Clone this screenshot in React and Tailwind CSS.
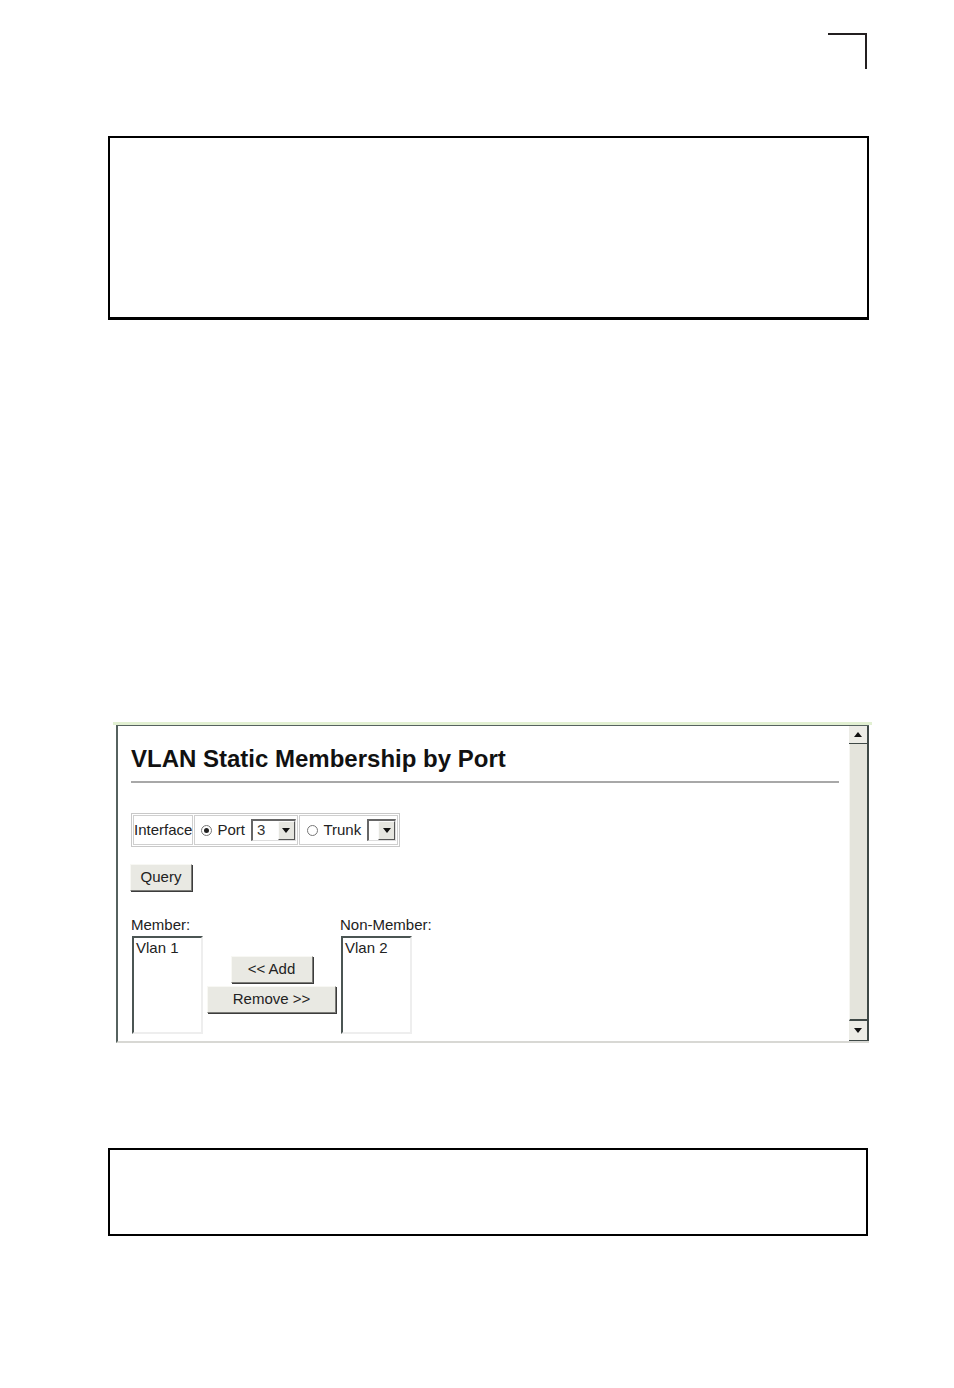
import React from "react";

const font = { fontFamily: '"Liberation Sans", Arial, sans-serif' };

const Btn = ({ children, className = "" }) => (
	<div
		className={`flex items-center justify-center bg-[#e9e9e3] border border-t-[#f8f8f4] border-l-[#f8f8f4] border-b-[#7c7c78] border-r-[#7c7c78] shadow-[1px_1px_0_#3c3c3c] text-[15px] text-[#222] ${className}`}
	>
		{children}
	</div>
);

const Radio = ({ checked }) => (
	<span className="w-[11px] h-[11px] rounded-full border border-[#777] bg-white flex items-center justify-center">
		{checked && <span className="w-[5px] h-[5px] rounded-full bg-[#222]" />}
	</span>
);

const Arrow = ({ down = true }) => (
	<svg width="8" height="5" viewBox="0 0 8 5">
		<path d={down ? "M0 0h8L4 5z" : "M0 5h8L4 0z"} fill="#111" />
	</svg>
);

const Select = ({ value, width }) => (
	<div
		className={`h-[22px] flex items-stretch bg-white border-t-2 border-l-2 border-[#666] border-b border-r border-b-[#ddd] border-r-[#ddd] ${width}`}
	>
		<span className="flex-1 pl-[4px] text-[15px] leading-[18px] text-[#333]">{value}</span>
		<span className="w-[17px] bg-[#e6e6e0] border border-t-[#fafafa] border-l-[#fafafa] border-b-[#555] border-r-[#555] flex items-center justify-center">
			<Arrow />
		</span>
	</div>
);

const ListBox = ({ item }) => (
	<div className="w-[71px] h-[98px] bg-white border-t-2 border-l-2 border-[#4b5553] border-b-2 border-r-2 border-b-[#eee] border-r-[#eee] px-[2px] text-[15px] leading-[20px] text-[#222]">
		{item}
	</div>
);

const VlanScreen = () => (
	<div className="ml-[113px] w-[759px] h-[325px] bg-white border-t-[3px] border-[#e2f0d2] px-[3px] pb-[4px] flex">
		<div className="flex-1 flex border-t border-l-2 border-[#56625f] border-b-2 border-b-[#d8d8d4]">
			{/* Content */}
			<div className="flex-1 pl-[13px] pr-[10px] pt-[20px]">
				<h1 className="text-[24px] leading-[26px] font-bold text-[#111]">
					VLAN Static Membership by Port
				</h1>
				<div className="mt-[9px] h-[2px] bg-[#a8a8a8]" />

				{/* Interface table */}
				<div className="mt-[30px] inline-flex gap-[1px] p-[1px] border border-[#c8c8c8] text-[15px] text-[#222]">
					<div className="h-[30px] flex items-center border border-[#cfcfcf]">Interface</div>
					<div className="h-[30px] w-[104px] pl-[6px] flex items-center gap-[5px] border border-[#cfcfcf]">
						<Radio checked />
						<span className="mr-[1px]">Port</span>
						<Select value="3" width="w-[45px]" />
					</div>
					<div className="h-[30px] w-[99px] pl-[7px] flex items-center gap-[5px] border border-[#cfcfcf]">
						<Radio />
						<span className="mr-[1px]">Trunk</span>
						<Select value="" width="w-[29px]" />
					</div>
				</div>

				<Btn className="mt-[17px] w-[62px] h-[27px] -ml-[1px]">Query</Btn>

				{/* Member lists */}
				<div className="mt-[25px] flex text-[15px] text-[#222]">
					<div>
						<div className="leading-[18px] mb-[2px]">Member:</div>
						<div className="ml-[1px]">
							<ListBox item="Vlan 1" />
						</div>
					</div>
					<div className="ml-[4px] w-[129px] flex flex-col items-center pt-[40px] gap-[3px]">
						<Btn className="w-[82px] h-[27px]">&lt;&lt; Add</Btn>
						<Btn className="w-[129px] h-[27px]">Remove &gt;&gt;</Btn>
					</div>
					<div className="ml-[4px]">
						<div className="leading-[18px] mb-[2px]">Non-Member:</div>
						<div className="ml-[1px]">
							<ListBox item="Vlan 2" />
						</div>
					</div>
				</div>
			</div>

			{/* Scrollbar */}
			<div className="w-[20px] flex flex-col border-r-2 border-[#3e4846]">
				<div className="h-[18px] bg-[#ecece6] border-b border-[#3e4846] flex items-center justify-center">
					<Arrow down={false} />
				</div>
				<div className="flex-1 bg-[#e4e4dc] border-l border-[#f6f6f2] border-b-2 border-b-[#3e4846]" />
				<div className="h-[20px] bg-[#ecece6] border-b border-[#3e4846] flex items-center justify-center">
					<Arrow />
				</div>
			</div>
		</div>
	</div>
);

export default function App() {
	return (
		<div className="w-[954px] h-[1388px] bg-white overflow-hidden" style={font}>
			{/* Corner crop mark */}
			<div className="pt-[33px] flex justify-end pr-[87px]">
				<div className="w-[39px] h-[36px] border-t-2 border-r-2 border-[#231f20]" />
			</div>

			{/* Top box */}
			<div className="mt-[67px] ml-[108px] w-[761px] h-[184px] border-2 border-b-[3px] border-black" />

			{/* Screenshot */}
			<div className="mt-[402px]">
				<VlanScreen />
			</div>

			{/* Bottom box */}
			<div className="mt-[101px] ml-[108px] w-[760px] h-[88px] border-2 border-black" />
		</div>
	);
}
